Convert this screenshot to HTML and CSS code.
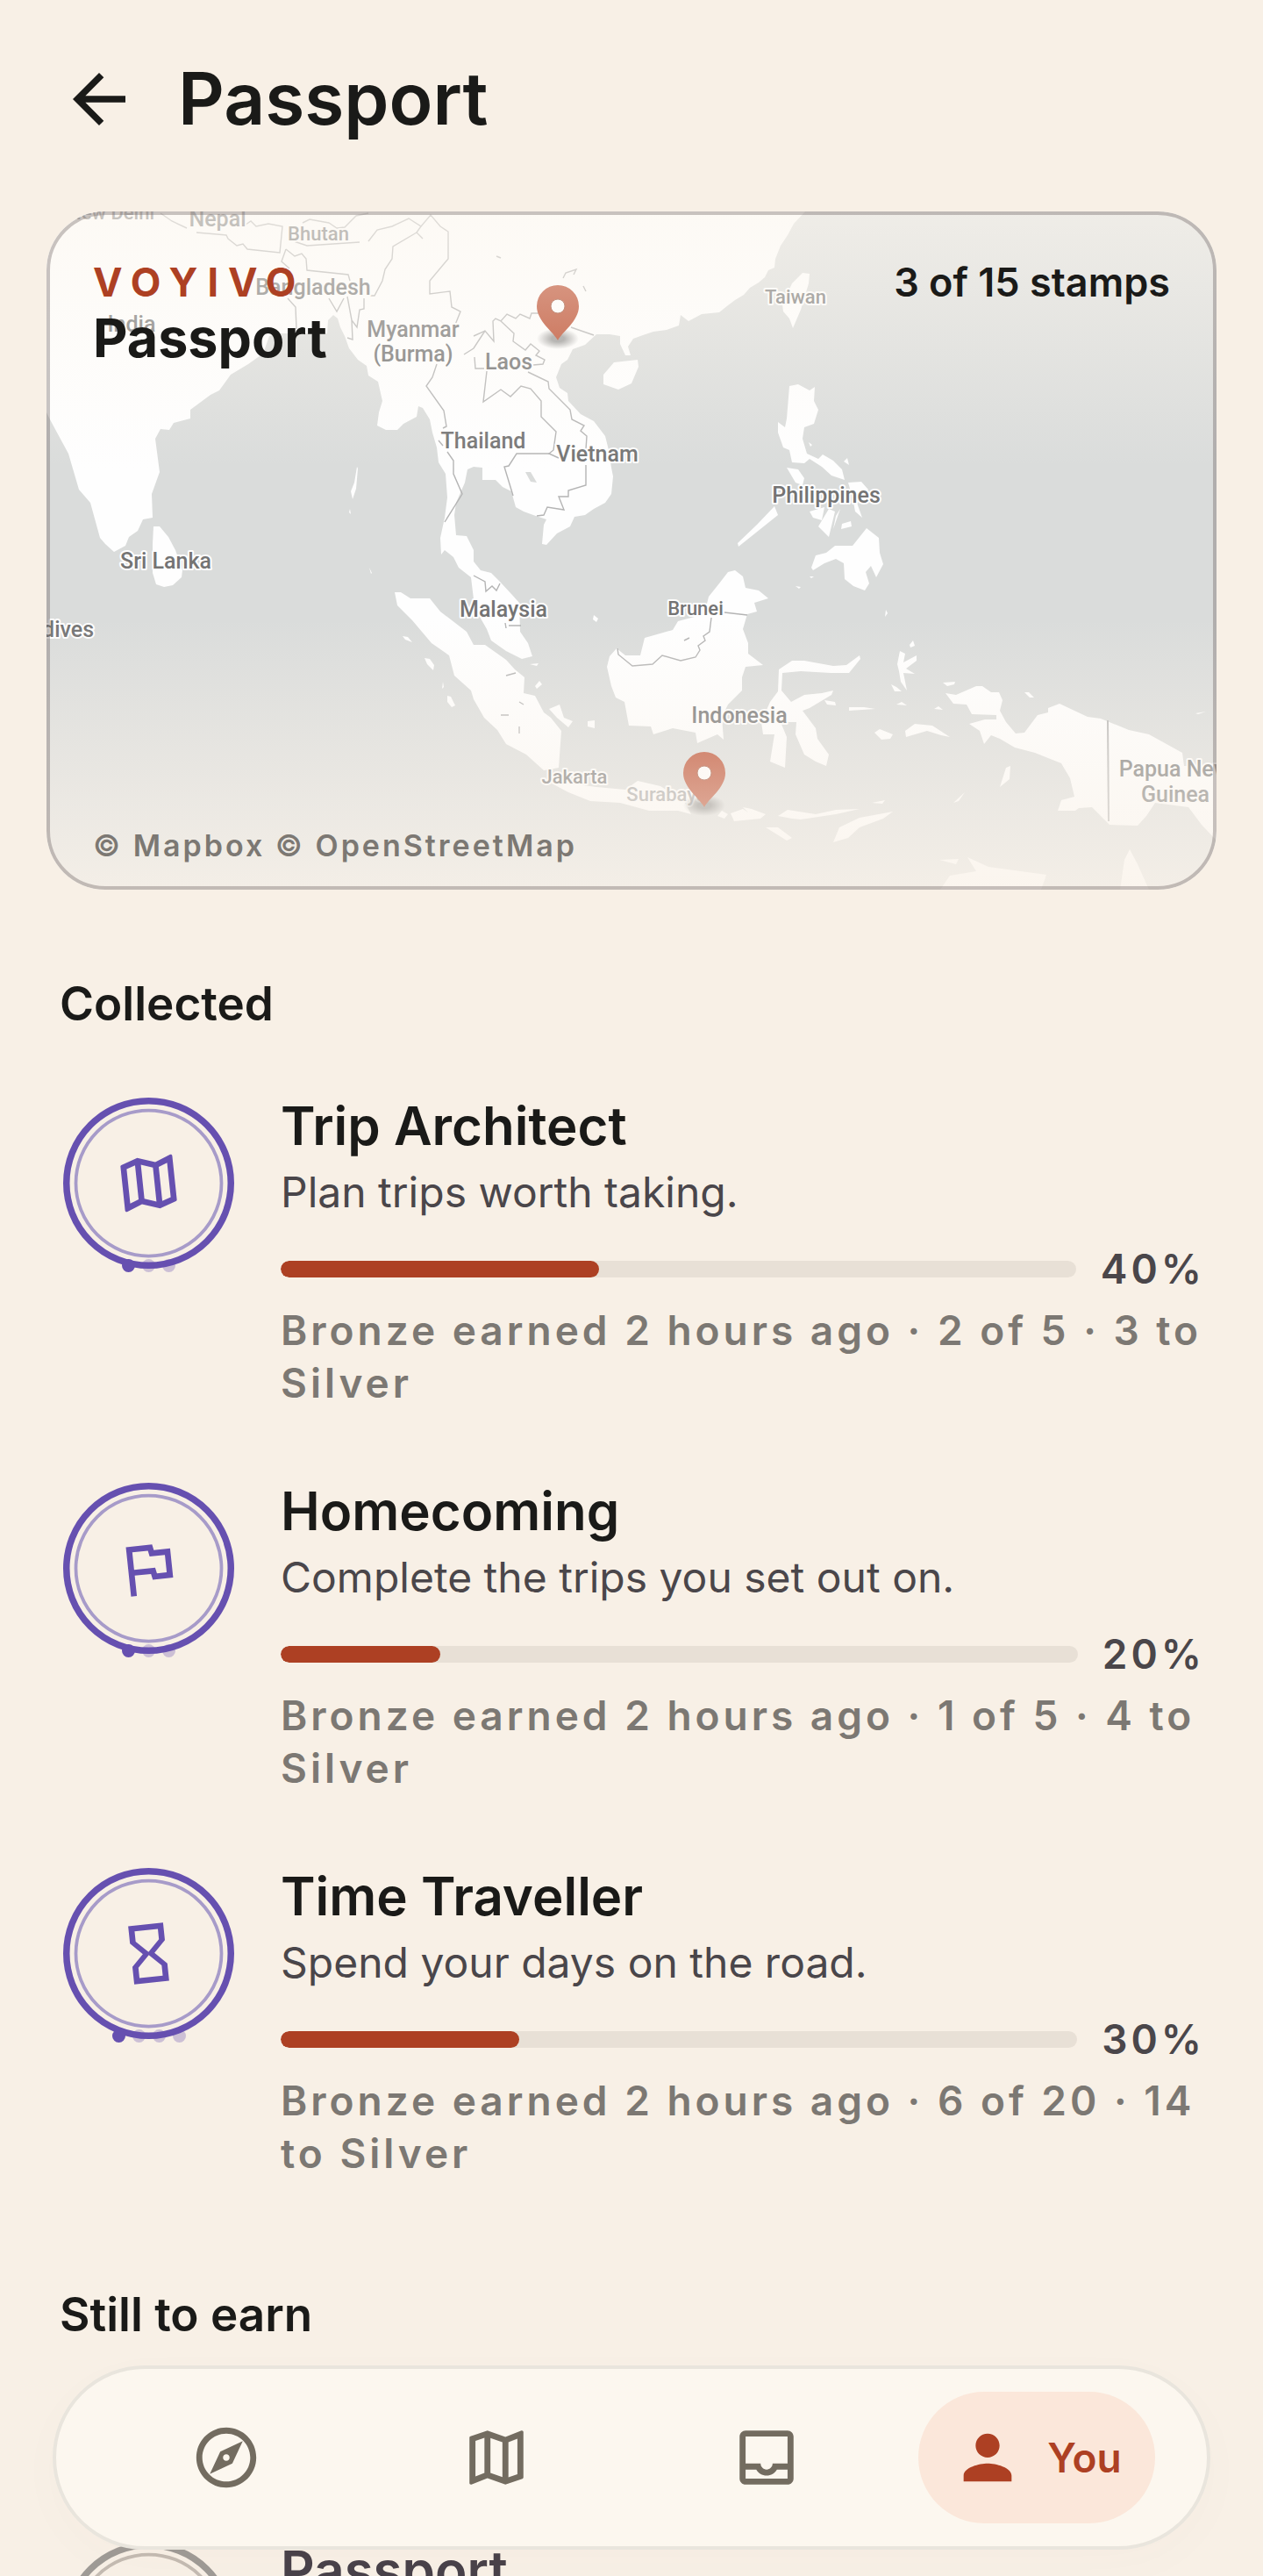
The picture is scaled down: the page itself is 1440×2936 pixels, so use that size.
FILE: index.html
```
<!DOCTYPE html>
<html lang="en">

<head>
    <meta charset="UTF-8">
    <meta name="viewport" content="width=device-width, initial-scale=1.0">
    <title>Passport</title>
    <link rel="stylesheet" href="styles.css">
</head>

<body>
    <!-- shared icons -->
    <svg class="sprite" aria-hidden="true">
        <symbol id="icon-map" viewBox="0 0 24 24">
            <path d="M20.5 3l-.16.03L15 5.1 9 3 3.36 4.9c-.21.07-.36.25-.36.48V20.5c0 .28.22.5.5.5l.16-.03L9 18.9l6 2.1 5.64-1.9c.21-.07.36-.25.36-.48V3.5c0-.28-.22-.5-.5-.5zM10 5.47l4 1.4v11.66l-4-1.4V5.47zm-5 .99l3-1.01v11.7l-3 1.16V6.46zm14 11.08l-3 1.01V6.86l3-1.16v11.84z" />
        </symbol>
        <symbol id="pin" viewBox="-30 -70 60 90" overflow="visible">
            <ellipse cx="0" cy="-2" rx="24" ry="12" fill="url(#pinShadow)" />
            <path d="M0 0C-5 -10 -24 -22 -24 -39A24 24 0 1 1 24 -39C24 -22 5 -10 0 0Z" fill="#b94526" />
            <circle cx="0" cy="-39" r="8" fill="#fff" stroke="#9c4a30" stroke-width="1" />
        </symbol>
    </svg>

    <div class="screen">
        <header class="topbar">
            <button class="back" type="button" aria-label="Back">
                <svg viewBox="0 0 24 24">
                    <path d="M20 11H7.83l5.59-5.59L12 4l-8 8 8 8 1.41-1.41L7.83 13H20v-2z" />
                </svg>
            </button>
            <h1>Passport</h1>
        </header>

        <section class="passport-card">
            <svg class="map" viewBox="53 241 1334 773" role="img" aria-label="Map of visited places">
                <defs>
                    <radialGradient id="pinShadow">
                        <stop offset="0.3" stop-color="#555" stop-opacity="0.6" />
                        <stop offset="1" stop-color="#555" stop-opacity="0" />
                    </radialGradient>
                </defs>
                <rect x="53" y="241" width="1334" height="773" fill="#dadcdb" />

                <g class="land">
                    <!-- mainland Asia -->
                    <path d="M53 241H918L905 255 898 268 890 280 884 295 883 305 876 308 872 316 865 322 855 328 848 336 838 342 830 348 820 356 800 358 785 366 776 359 774 371 760 376 745 378 733 382 722 386 716 395 719 405 713 405 707 392 707 383 695 381 680 381 667 393 653 398 647 410 640 415 634 430 638 442 647 448 648 457 662 472 677 480 690 497 694 513 697 533 699 543 697 563 690 573 677 580 667 587 655 589 650 600 635 608 623 621 618 620 620 598 623 592 608 587 597 583 588 578 583 560 573 555 565 547 550 547 550 533 540 532 533 535 530 550 520 573 518 587 520 610 532 611 540 627 540 640 548 650 560 653 570 663 583 677 592 687 593 720 602 733 607 748 595 751 577 742 560 730 555 717 547 703 540 683 537 658 523 647 517 635 507 627 503 632 502 613 507 590 510 567 508 540 500 527 498 510 493 493 490 478 482 465 477 463 475 475 460 483 453 490 440 490 430 485 432 470 436 457 431 435 420 428 418 417 408 410 398 397 393 383 388 373 385 363 380 359 374 365 373 380 320 380 307 383 300 403 283 415 263 427 250 445 240 450 217 467 217 477 198 482 193 490 183 489 177 500 182 538 173 563 174 590 163 592 157 605 147 612 143 622 130 629 120 620 114 613 103 573 90 558 78 517 65 493 58 480 53 470Z" />
                    <!-- Sri Lanka, Andamans, Hainan, Taiwan -->
                    <path d="M175 600L182 600 192 612 200 627 208 650 207 658 197 667 187 669 178 666 174 653 174 620Z" />
                    <path d="M407 532L408 534 406 557 402 569 400 560 404 550ZM399 580L400 586 398 584ZM421 647L424 653 423 654Z" />
                    <path d="M700 413L727 410 728 418 720 437 705 444 688 438 688 427Z" />
                    <path d="M915 311L923 312 922 323 913 353 904 374 900 363 893 355 892 347 903 323Z" />
                    <!-- Philippines -->
                    <path d="M900 440L910 438 923 445 929 441 928 457 933 467 928 483 917 487 915 500 920 517 933 523 938 518 950 525 960 535 963 547 948 542 937 532 923 523 917 528 903 527 900 513 893 510 887 493 887 481 895 487 897 477Z" />
                    <path d="M897 533L910 535 917 545 915 553 907 550ZM883 577L887 587 867 603 842 623 841 619 863 598ZM962 526L966 522 968 530ZM922 504L926 507 924 509Z" />
                    <path d="M967 550L982 549 990 558 977 573 983 590 975 583 972 567ZM923 583L940 578 937 593 927 590ZM945 580L952 583 945 612 933 600ZM958 580L950 603 953 588ZM960 597L970 594 971 600 959 603Z" />
                    <path d="M988 602L1002 613 1003 630 1007 643 999 658 993 645 987 652 991 665 986 673 973 668 963 660 962 642 953 637 940 642 927 650 925 647 930 633 942 630 952 622 957 622 972 622Z" />
                    <path d="M907 668L913 669 911 671ZM923 657L928 657 925 659ZM677 701L682 705 680 709 676 706ZM1010 695L1012 699 1009 703Z" />
                    <!-- Sumatra and small islands -->
                    <path d="M450 675L457 675 468 682 490 682 502 697 532 720 540 735 553 735 577 752 587 763 598 772 597 790 610 793 620 812 628 818 640 833 637 875 620 878 600 860 577 848 567 832 552 818 540 797 537 787 518 770 512 747 492 733 470 707 453 690Z" />
                    <path d="M459 725L465 726 470 732 462 729ZM484 750L490 751 495 758 494 764 487 757ZM505 777L506 783 504 785ZM510 793L514 794 519 804 515 806 510 800ZM526 812L528 815Z" />
                    <path d="M626 808L638 803 643 818 653 822 648 829 635 818ZM670 822L678 821 678 830 670 828ZM610 782L615 776 618 780 612 785ZM604 757L614 756 612 759Z" />
                    <!-- Borneo -->
                    <path d="M830 652L838 650 847 657 850 670 865 673 876 682 860 687 863 697 852 700 847 717 853 733 853 745 870 758 850 760 846 772 846 787 830 803 823 817 825 843 818 837 795 847 793 835 767 830 745 837 742 828 717 827 712 800 702 795 697 782 692 760 695 748 703 739 713 747 730 747 735 727 767 718 773 708 803 700 808 680 820 665Z" />
                    <!-- Java and the lesser Sundas -->
                    <path d="M618 887L650 893 680 897 713 900 727 890 753 896 780 913 788 928 773 924 740 924 707 915 673 913 648 903Z" />
                    <path d="M818 930L823 924 830 928 826 933ZM833 927L847 922 853 926 847 920 857 922 873 928 867 933 837 936ZM887 930L898 923 930 928 953 923 980 922 953 928 913 934 903 933ZM873 943L887 943 903 955 897 958ZM950 960L957 943 980 932 1018 925 1007 933 980 943 967 955Z" />
                    <!-- Sulawesi -->
                    <path d="M903 753L917 753 950 759 965 758 980 747 981 751 968 767 947 767 913 765 892 767 891 787 902 800 917 792 937 790 950 787 948 792 923 807 915 810 930 830 932 842 945 860 942 873 930 868 917 860 907 837 908 823 890 823 897 840 895 875 878 868 883 837 870 837 868 823 878 800 887 788 888 763Z" />
                    <!-- Moluccas -->
                    <path d="M1023 757L1026 742 1032 745 1030 755 1045 747 1045 753 1033 762 1043 768 1030 767 1034 787 1027 777 1025 765ZM1037 735L1041 730 1043 736 1038 738ZM1016 780L1022 783 1028 788 1020 788ZM968 806L985 806 998 808 968 810ZM940 798L952 800 953 804 943 803Z" />
                    <path d="M997 835L1003 831 1018 837 1015 842 1005 843ZM1032 833L1043 825 1063 827 1083 840 1073 838 1057 833 1033 840ZM1022 803L1028 800 1034 804ZM1065 808L1070 805 1075 809ZM1075 778L1089 777 1088 780 1080 782ZM1168 789L1173 789 1179 795 1174 795ZM1173 806L1185 807ZM1140 897L1147 875 1152 873 1151 888ZM1087 915L1100 903 1093 913ZM994 915L1009 912 1006 916ZM1363 813L1375 811 1366 814Z" />
                    <!-- New Guinea -->
                    <path d="M1078 790L1090 792 1113 782 1120 782 1130 789 1139 789 1143 798 1140 810 1147 823 1158 836 1168 835 1183 815 1195 812 1195 807 1208 802 1240 817 1255 819 1287 832 1310 837 1348 858 1350 873 1387 873 1387 958 1370 940 1355 920 1317 915 1307 930 1297 941 1265 940 1245 920 1230 921 1226 924 1206 924 1210 912 1225 908 1220 887 1210 870 1180 858 1157 852 1140 842 1130 838 1122 848 1117 833 1105 825 1123 820 1136 820 1136 815 1108 814 1102 803 1087 802Z" />
                    <!-- north of Australia -->
                    <path d="M1072 1014L1083 998 1113 993 1103 977 1127 988 1193 997 1187 1014ZM1288 968L1297 985 1310 1014 1277 1014 1282 980ZM1071 980L1093 979 1090 985Z" />
                </g>

                <g class="borders">
                    <path d="M183 243L196 252 213 260M224 265L258 268 260 272 270 280 277 278 282 284 319 288 322 258 306 255 292 258 286 252 280 256" />
                    <path d="M335 275L350 280 410 276M345 254L353 250 375 254 384 260 393 259 406 246 420 243M420 275L430 262 447 258 466 249 480 258 475 265 482 272M475 265L448 281 447 295 439 307 436 320 427 337 422 337" />
                    <path d="M480 258L491 245 502 258 511 264 511 295 490 320 490 335 513 332 515 350 525 355 519 370" />
                    <path d="M326 284L336 292 344 289 349 295 350 308 397 313 399 320M326 284L321 298 330 306M328 340L337 350 338 375M375 340L384 355 392 340M396 338L401 365 407 373 410 353 415 352 415 340M401 365L402 387 396 385" />
                    <path d="M540 383L553 377 563 389 562 366 565 363 571 366 578 358 588 363 593 358 604 363 606 357 617 357M651 373L677 382M571 366L586 380 585 389 599 399 605 392 615 400 611 405 621 410 619 415 608 416" />
                    <path d="M553 377L540 397 529 404M541 407L542 420 552 420M555 423L551 458 571 444 582 452 594 440 605 443 617 457 617 475 634 492 631 513 626 517 637 522M602 424L625 435 626 443 650 467 652 478 666 485 662 491 669 497 668 512M668 530L668 553 648 559 648 566 637 566 643 581 624 578 620 587 612 588" />
                    <path d="M626 517L589 517 580 531 575 532 585 565M498 415L493 430 486 440 506 468 509 486 505 488 M510 515L517 525 517 540 527 563 507 595M500 502L505 508" />
                    <path d="M540 656L553 663 554 674 561 668 566 673 570 665M576 710L577 716M580 713L594 713" />
                    <path d="M704 739L705 746 721 759 744 757 755 747 776 753 793 749 798 741 796 736 804 730 802 725 809 720 811 704M826 698L852 701" />
                    <path d="M1263 821L1264 936" stroke-width="2" />
                    <path d="M566 292L571 294M642 317L645 311 657 307 654 313M665 326L668 332M592 800L597 803M571 815L580 815M592 828L592 836M577 770L588 767M780 730L786 727" />
                </g>
                <path d="M599 538L605 538 612 550 605 549Z" fill="#dadcdb" />

                <g class="places">
                    <text x="176" y="250" text-anchor="end" class="city">New Delhi</text>
                    <text x="248" y="258">Nepal</text>
                    <text x="363" y="274" class="city">Bhutan</text>
                    <text x="357" y="336">Bangladesh</text>
                    <text x="150" y="378">India</text>
                    <text x="471" y="384">Myanmar</text>
                    <text x="471" y="412">(Burma)</text>
                    <text x="580" y="421">Laos</text>
                    <text x="551" y="511">Thailand</text>
                    <text x="681" y="526">Vietnam</text>
                    <text x="942" y="573">Philippines</text>
                    <text x="907" y="346" class="city">Taiwan</text>
                    <text x="189" y="648">Sri Lanka</text>
                    <text x="107" y="726" text-anchor="end">Maldives</text>
                    <text x="574" y="703">Malaysia</text>
                    <text x="793" y="701" class="city">Brunei</text>
                    <text x="843" y="824">Indonesia</text>
                    <text x="655" y="893" class="city">Jakarta</text>
                    <text x="760" y="913" class="city faint">Surabaya</text>
                    <text x="1339" y="885">Papua New</text>
                    <text x="1340" y="914">Guinea</text>
                </g>

                <use href="#pin" x="606" y="318" width="60" height="90" />
                <use href="#pin" x="773" y="850" width="60" height="90" />
            </svg>

            <div class="card-overlay">
                <div class="card-head">
                    <div>
                        <p class="brand">VOYIVO</p>
                        <h2>Passport</h2>
                    </div>
                    <p class="stamp-count">3 of 15 stamps</p>
                </div>
                <p class="attribution">© Mapbox © OpenStreetMap</p>
            </div>
        </section>

        <main>
            <section class="stamps">
                <h3>Collected</h3>

                <article class="stamp">
                    <svg class="badge" viewBox="0 0 202 208">
                        <circle class="ring" cx="101.5" cy="103.5" r="93.75" />
                        <circle class="ring-inner" cx="101.5" cy="103.5" r="83" />
                        <circle class="dot on" cx="78.5" cy="197.5" r="7.5" />
                        <circle class="dot" cx="101.5" cy="197.5" r="7.5" />
                        <circle class="dot" cx="124.5" cy="197.5" r="7.5" />
                        <g transform="rotate(-6 101.5 103.5)">
                            <use href="#icon-map" x="61.5" y="63.5" width="80" height="80" />
                        </g>
                    </svg>
                    <div class="stamp-body">
                        <h4>Trip Architect</h4>
                        <p class="desc">Plan trips worth taking.</p>
                        <div class="progress-row">
                            <progress value="40" max="100" aria-label="Trip Architect progress"></progress>
                            <span>40%</span>
                        </div>
                        <p class="meta">Bronze earned 2 hours ago · 2 of 5 · 3 to Silver</p>
                    </div>
                </article>

                <article class="stamp">
                    <svg class="badge" viewBox="0 0 202 208">
                        <circle class="ring" cx="101.5" cy="103.5" r="93.75" />
                        <circle class="ring-inner" cx="101.5" cy="103.5" r="83" />
                        <circle class="dot on" cx="78.5" cy="197.5" r="7.5" />
                        <circle class="dot" cx="101.5" cy="197.5" r="7.5" />
                        <circle class="dot" cx="124.5" cy="197.5" r="7.5" />
                        <g transform="rotate(-6 101.5 103.5)">
                            <svg x="61.5" y="63.5" width="80" height="80" viewBox="0 0 24 24">
                                <path d="M12.36 6l.4 2H18v6h-3.36l-.4-2H7V6h5.36M14 4H5v17h2v-7h5.6l.4 2h7V6h-5.6L14 4z" />
                            </svg>
                        </g>
                    </svg>
                    <div class="stamp-body">
                        <h4>Homecoming</h4>
                        <p class="desc">Complete the trips you set out on.</p>
                        <div class="progress-row">
                            <progress value="20" max="100" aria-label="Homecoming progress"></progress>
                            <span>20%</span>
                        </div>
                        <p class="meta">Bronze earned 2 hours ago · 1 of 5 · 4 to Silver</p>
                    </div>
                </article>

                <article class="stamp">
                    <svg class="badge" viewBox="0 0 202 208">
                        <circle class="ring" cx="101.5" cy="103.5" r="93.75" />
                        <circle class="ring-inner" cx="101.5" cy="103.5" r="83" />
                        <circle class="dot on" cx="67.5" cy="197.5" r="7.5" />
                        <circle class="dot" cx="90.5" cy="197.5" r="7.5" />
                        <circle class="dot" cx="113.5" cy="197.5" r="7.5" />
                        <circle class="dot" cx="136.5" cy="197.5" r="7.5" />
                        <g transform="rotate(-6 101.5 103.5)">
                            <svg x="61.5" y="63.5" width="80" height="80" viewBox="0 0 24 24">
                                <path d="M6 2v6h.01L6 8.01 10 12l-4 4 .01.01H6V22h12v-5.99h-.01L18 16l-4-4 4-3.99-.01-.01H18V2H6zm10 14.5V20H8v-3.5l4-4 4 4zm-4-5l-4-4V4h8v3.5l-4 4z" />
                            </svg>
                        </g>
                    </svg>
                    <div class="stamp-body">
                        <h4>Time Traveller</h4>
                        <p class="desc">Spend your days on the road.</p>
                        <div class="progress-row">
                            <progress value="30" max="100" aria-label="Time Traveller progress"></progress>
                            <span>30%</span>
                        </div>
                        <p class="meta">Bronze earned 2 hours ago · 6 of 20 · 14 to Silver</p>
                    </div>
                </article>
            </section>

            <section class="stamps locked">
                <h3>Still to earn</h3>

                <article class="stamp">
                    <svg class="badge" viewBox="0 0 202 208">
                        <circle class="ring" cx="101.5" cy="103.5" r="93.75" />
                        <circle class="ring-inner" cx="101.5" cy="103.5" r="83" />
                    </svg>
                    <div class="stamp-body">
                        <h4>Passport</h4>
                    </div>
                </article>
            </section>
        </main>
    </div>

    <nav class="tabbar">
        <a href="#explore" aria-label="Explore">
            <svg viewBox="0 0 24 24">
                <path d="M12 2C6.48 2 2 6.48 2 12s4.48 10 10 10 10-4.48 10-10S17.52 2 12 2zm0 18c-4.41 0-8-3.59-8-8s3.59-8 8-8 8 3.59 8 8-3.59 8-8 8zm-5.5-2.5l7.51-3.49L17.5 6.5 9.99 9.99 6.5 17.5zm5.5-6.6c.61 0 1.1.49 1.1 1.1s-.49 1.1-1.1 1.1-1.1-.49-1.1-1.1.49-1.1 1.1-1.1z" />
            </svg>
        </a>
        <a href="#trips" aria-label="Trips">
            <svg>
                <use href="#icon-map" />
            </svg>
        </a>
        <a href="#inbox" aria-label="Inbox">
            <svg viewBox="0 0 24 24">
                <path d="M19 3H5c-1.1 0-2 .9-2 2v14c0 1.1.9 2 2 2h14c1.1 0 2-.9 2-2V5c0-1.1-.9-2-2-2zm0 16H5v-3h3.56c.69 1.19 1.97 2 3.45 2s2.75-.81 3.45-2H19v3zm0-5h-4.99c0 1.1-.9 2-2 2s-2-.9-2-2H5V5h14v9z" />
            </svg>
        </a>
        <a href="#you" aria-current="page">
            <span class="pill">
                <svg viewBox="0 0 24 24">
                    <path d="M12 12c2.21 0 4-1.79 4-4s-1.79-4-4-4-4 1.79-4 4 1.79 4 4 4zm0 2c-2.67 0-8 1.34-8 4v2h16v-2c0-2.66-5.33-4-8-4z" />
                </svg>
                You
            </span>
        </a>
    </nav>
</body>

</html>
```
FILE: styles.css
```
* {
    box-sizing: border-box;
    margin: 0;
    padding: 0;
}

body {
    font-family: Inter, "Liberation Sans", sans-serif;
    background-color: #f8f0e6;
    color: #1a1a18;
}

.sprite {
    position: absolute;
    width: 0;
    height: 0;
}

.screen {
    height: 100vh;
    overflow-y: auto;
    scrollbar-width: none;
}

.topbar {
    display: flex;
    align-items: center;
    gap: 45px;
    padding: 63px 68px 78px;
}

.topbar h1 {
    font-size: 82px;
    font-weight: 600;
    line-height: 100px;
}

.back {
    width: 90px;
    height: 90px;
    border: none;
    background: none;
    cursor: pointer;
}

.back svg {
    display: block;
    fill: #1a1a18;
}

/* Passport card */
.passport-card {
    display: grid;
    margin: 0 53px;
    border-radius: 67px;
    overflow: hidden;
    position: relative;
}

.passport-card::after {
    content: "";
    position: absolute;
    z-index: 2;
    inset: 0;
    border: 4px solid rgba(100, 90, 90, 0.35);
    border-radius: 67px;
    pointer-events: none;
}

.map,
.card-overlay {
    grid-area: 1 / 1;
}

.map {
    display: block;
    width: 100%;
}

.land {
    fill: #fefefe;
}

.borders {
    fill: none;
    stroke: #b4b4b4;
    stroke-width: 1.4;
}

.places {
    font-family: Roboto, sans-serif;
    font-size: 25px;
    font-weight: 500;
    fill: #747474;
    stroke: #fefefe;
    stroke-width: 4px;
    stroke-linejoin: round;
    paint-order: stroke;
    text-anchor: middle;
}

.places .city {
    font-size: 22px;
}

.places .faint {
    fill: #a2a2a2;
}

.card-overlay {
    z-index: 1;
    display: flex;
    flex-direction: column;
    justify-content: space-between;
    padding: 51px 53px 28px;
    background: linear-gradient(to bottom, rgba(252, 247, 239, 0.62), rgba(252, 247, 239, 0) 38%, rgba(252, 247, 239, 0) 60%, rgba(250, 243, 234, 0.8));
}

.card-head {
    display: flex;
    justify-content: space-between;
}

.brand {
    color: #ad4023;
    font-size: 45px;
    font-weight: 700;
    line-height: 60px;
    letter-spacing: 11px;
}

.card-head h2 {
    font-size: 61px;
    font-weight: 700;
    line-height: 66px;
}

.stamp-count {
    font-size: 45px;
    font-weight: 600;
    line-height: 60px;
}

.attribution {
    color: #7c7873;
    font-size: 34px;
    font-weight: 600;
    line-height: 44px;
    letter-spacing: 3px;
}

/* Stamps */
main {
    padding: 98px 66px 0 68px;
}

.stamps h3 {
    font-size: 53px;
    font-weight: 600;
    line-height: 64px;
    margin-bottom: 69px;
}

.stamp {
    display: flex;
    align-items: flex-start;
    gap: 50px;
    margin-bottom: 77px;
}

.badge {
    flex: none;
    width: 202px;
    height: 208px;
    fill: #6650b0;
}

.ring {
    fill: none;
    stroke: #6650b0;
    stroke-width: 7.5;
}

.ring-inner {
    fill: none;
    stroke: #a79bc9;
    stroke-width: 3.75;
}

.dot {
    fill: #6650b0;
    fill-opacity: 0.3;
}

.dot.on {
    fill-opacity: 1;
}

.stamp-body {
    flex: 1;
}

.stamp h4 {
    font-size: 60px;
    font-weight: 600;
    line-height: 76px;
}

.desc {
    color: #4a464a;
    font-size: 48px;
    line-height: 60px;
    margin-top: 8px;
}

.progress-row {
    display: flex;
    align-items: center;
    gap: 28px;
    margin-top: 27px;
    color: #4a464a;
    font-size: 46px;
    font-weight: 600;
    line-height: 60px;
    letter-spacing: 4px;
}

progress {
    appearance: none;
    flex: 1;
    height: 19px;
    border: none;
    border-radius: 10px;
    overflow: hidden;
    background-color: #e8e0d6;
}

progress::-webkit-progress-bar {
    background-color: #e8e0d6;
}

progress::-webkit-progress-value {
    background-color: #ad4023;
    border-radius: 10px;
}

.meta {
    color: #7c7873;
    font-size: 46px;
    font-weight: 600;
    line-height: 60px;
    letter-spacing: 4px;
    margin-top: 10px;
}

.stamps .stamp {
    min-height: 362px;
}

.locked {
    padding-top: 44px;
}

.locked h3 {
    margin-bottom: 221px;
}

.locked h4 {
    color: #49424a;
}

.locked .ring {
    stroke: #9f9b96;
}

.locked .ring-inner {
    stroke: #c4bbb2;
}

/* Bottom tabs */
.tabbar {
    position: fixed;
    left: 60px;
    right: 60px;
    bottom: 30px;
    display: flex;
    align-items: center;
    height: 210px;
    padding: 0 40px;
    border: 4px solid #e9e5dd;
    border-radius: 105px;
    background-color: #fcf7ef;
    box-shadow: 0 15px 60px rgba(90, 70, 40, 0.02);
}

.tabbar a {
    flex: 1;
    display: flex;
    justify-content: center;
    text-decoration: none;
    color: #ad4023;
}

.tabbar svg {
    width: 82px;
    height: 82px;
    fill: #736c60;
}

.pill {
    display: flex;
    align-items: center;
    gap: 27px;
    height: 150px;
    padding: 0 38px;
    border-radius: 75px;
    background-color: #fbe7da;
    font-size: 46px;
    font-weight: 600;
}

.tabbar .pill svg {
    fill: #ad4023;
}
```
